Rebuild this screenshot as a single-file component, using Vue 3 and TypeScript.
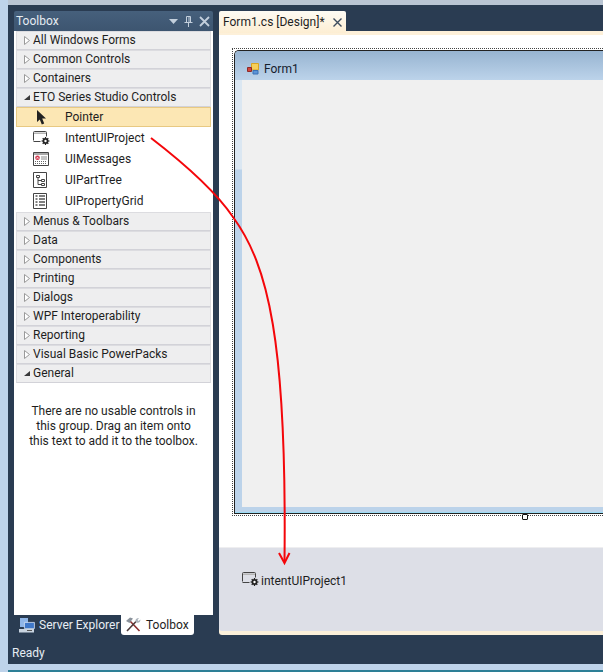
<script setup lang="ts">
const groupsTop = ['All Windows Forms', 'Common Controls', 'Containers']
const groupsBottom = ['Menus & Toolbars', 'Data', 'Components', 'Printing', 'Dialogs', 'WPF Interoperability', 'Reporting', 'Visual Basic PowerPacks']
</script>

<template>
  <div class="app">
    <div class="top-strip"></div>
    <div class="shell">
      <aside class="left">
        <div class="toolbox">
          <header class="tb-head">
            <span class="tb-title">Toolbox</span>
            <span class="tb-btns">
              <svg width="9" height="5" viewBox="0 0 9 5"><path d="M0 0h9L4.500 5z" fill="#c3cfdc" /></svg>
              <svg width="9" height="11" viewBox="0 0 9 11"><path d="M2.500.5h4v6h-4zM5 1v5.500M.5 6.500h8M4.500 7v4" fill="none" stroke="#c3cfdc" /></svg>
              <svg width="11" height="11" viewBox="0 0 11 11"><path d="M1 1l9 9M10 1l-9 9" stroke="#c3cfdc" stroke-width="1.800" /></svg>
            </span>
          </header>
          <div class="tb-body">
            <div v-for="g in groupsTop" :key="g" class="group">
              <svg class="tri" width="6" height="9" viewBox="0 0 6 9"><path d="M.5.500l5 4-5 4z" fill="#fff" stroke="#9a9a9a" /></svg>
              <span>{{ g }}</span>
            </div>
            <div class="group">
              <svg class="tri" width="6" height="9" viewBox="0 0 6 9"><path d="M6 2v5H0z" fill="#3a3a3a" /></svg>
              <span>ETO Series Studio Controls</span>
            </div>
            <div class="item selected">
              <span class="ico pointer">
                <svg width="10" height="15" viewBox="0 0 10 15"><path d="M0 0v12l2.800-2.600 2 5 2.400-1-2-4.800H9z" fill="#222" /></svg>
              </span>
              <span>Pointer</span>
            </div>
            <div class="item tall">
              <span class="ico">
                <svg width="17" height="14" viewBox="0 0 17 14">
                  <path d="M.5 9.500v-8a1 1 0 0 1 1-1h11a1 1 0 0 1 1 1v4M.5 10.500h7" fill="none" stroke="#444" />
                  <path d="M1 1.500h12V3H1z" fill="#b5b5b5" />
                  <path d="M12.500 6v8M8.500 10h8M9.700 7.200l5.600 5.600M15.300 7.200l-5.600 5.600" stroke="#222" stroke-width="1.200" />
                  <circle cx="12.500" cy="10" r="3" fill="#222" />
                  <circle cx="12.500" cy="10" r="1.200" fill="#fff" />
                </svg>
              </span>
              <span>IntentUIProject</span>
            </div>
            <div class="item tall">
              <span class="ico">
                <svg width="16" height="14" viewBox="0 0 16 14">
                  <path d="M.5.500h15v13H.5z" fill="#fff" stroke="#444" />
                  <path d="M1 1h14v2H1z" fill="#a9a9a9" />
                  <circle cx="4.500" cy="5.800" r="2.300" fill="#d2344a" />
                  <path d="M3.500 4.800l2 2M5.500 4.800l-2 2" stroke="#fff" stroke-width=".7" />
                  <path d="M8 5h6M8 7h6" stroke="#8a8a8a" />
                  <path d="M2 9.500h12M2 11.500h12" stroke="#666" stroke-dasharray="1 1" />
                </svg>
              </span>
              <span>UIMessages</span>
            </div>
            <div class="item tall">
              <span class="ico">
                <svg width="14" height="16" viewBox="0 0 14 16">
                  <path d="M.5.500h13v15H.5z" fill="#fff" stroke="#444" />
                  <path d="M3.500 3.500h3v2h-3zM8.500 7.500h3v2h-3zM8.500 11.500h3v2h-3zM5 5.500v7h3.500M5 8.500h3.500" fill="none" stroke="#444" />
                </svg>
              </span>
              <span>UIPartTree</span>
            </div>
            <div class="item tall last">
              <span class="ico">
                <svg width="14" height="16" viewBox="0 0 14 16">
                  <path d="M.5.500h13v15H.5z" fill="#fff" stroke="#444" />
                  <path d="M2.500 3h2M2.500 6h2M2.500 9h2M2.500 12h2M6 3h6M6 6h6M6 9h6M6 12h6" stroke="#555" stroke-width="1.500" />
                </svg>
              </span>
              <span>UIPropertyGrid</span>
            </div>
            <div v-for="g in groupsBottom" :key="g" class="group">
              <svg class="tri" width="6" height="9" viewBox="0 0 6 9"><path d="M.5.500l5 4-5 4z" fill="#fff" stroke="#9a9a9a" /></svg>
              <span>{{ g }}</span>
            </div>
            <div class="group">
              <svg class="tri" width="6" height="9" viewBox="0 0 6 9"><path d="M6 2v5H0z" fill="#3a3a3a" /></svg>
              <span>General</span>
            </div>
            <p class="empty">There are no usable controls in<br />this group. Drag an item onto<br />this text to add it to the toolbox.</p>
          </div>
        </div>
        <div class="tabs">
          <div class="tab dark">
            <svg width="16" height="15" viewBox="0 0 16 15">
              <path d="M1 0h8v9H1z" fill="#8fb6e8" />
              <path d="M5.400 4.400h10v6.200h-10z" fill="#3f78c9" stroke="#d5e3f5" stroke-width=".8" />
              <path d="M0 11h15v3.500H0z" fill="#c9d4e0" />
              <path d="M8 12.500h5" stroke="#555" />
            </svg>
            <span>Server Explorer</span>
          </div>
          <div class="tab light">
            <svg width="16" height="16" viewBox="0 0 16 16">
              <path d="M5 4l9.500 10" stroke="#8a2e2e" stroke-width="1.600" />
              <path d="M11 4.500L2 14" stroke="#4d3a3a" stroke-width="1.600" />
              <path d="M1 4l4-3.500 3 1L4.500 6z" fill="#8a929b" />
              <path d="M10.500 4.500c-.5-2 1-3.500 3.500-3.500l-1.500 2 1 1 2-1.500c0 2.500-2 4-4 3z" fill="#aab2ba" />
            </svg>
            <span>Toolbox</span>
          </div>
        </div>
      </aside>
      <main class="doc">
        <div class="doc-tabs">
          <div class="doc-tab">
            <span>Form1.cs [Design]*</span>
            <svg width="9" height="9" viewBox="0 0 9 9"><path d="M.5.500l8 8M8.500.500l-8 8" stroke="#3d4c5e" stroke-width="1.400" /></svg>
          </div>
        </div>
        <div class="cream-line"></div>
        <div class="design">
          <div class="selection">
            <div class="form">
              <div class="form-title">
                <svg width="13" height="13" viewBox="0 0 13 13">
                  <path d="M4.500 1.500h7v6.500h-7z" fill="#f6cf5a" stroke="#d9a520" />
                  <path d="M.5 5.500h4v4h-4z" fill="#d4463c" stroke="#8e2a28" />
                  <path d="M6 8.500h5v3.500H6z" fill="#5b94d8" stroke="#3a70b5" />
                </svg>
                <span>Form1</span>
              </div>
              <div class="form-client"></div>
            </div>
            <span class="grip"></span>
          </div>
        </div>
        <div class="tray">
          <svg width="17" height="14" viewBox="0 0 17 14">
            <path d="M.5 9.500v-8a1 1 0 0 1 1-1h11a1 1 0 0 1 1 1v4M.5 10.500h7" fill="none" stroke="#444" />
            <path d="M1 1.500h12V3H1z" fill="#b5b5b5" />
            <path d="M12.500 6v8M8.500 10h8M9.700 7.200l5.600 5.600M15.300 7.200l-5.600 5.600" stroke="#222" stroke-width="1.200" />
            <circle cx="12.500" cy="10" r="3" fill="#222" />
            <circle cx="12.500" cy="10" r="1.200" fill="#fff" />
          </svg>
          <span>intentUIProject1</span>
        </div>
      </main>
    </div>
    <footer class="status">Ready</footer>
    <div class="bottom-strip"></div>
    <svg class="arrow" width="603" height="672" viewBox="0 0 603 672">
      <path d="M151 138C190 168 218 195 233 217C268 265 287 340 284.500 562" fill="none" stroke="#f4060a" stroke-width="2" />
      <path d="M279 553l5.500 10 5-10" fill="none" stroke="#f4060a" stroke-width="2" />
    </svg>
  </div>
</template>

<style scoped>
.app {
  position: relative;
  width: 603px;
  height: 672px;
  overflow: hidden;
  display: flex;
  flex-direction: column;
  background: #2a3c52;
  border-left: 8px solid #bed3ea;
  box-sizing: border-box;
  font-family: Roboto, "Noto Sans", sans-serif;
  font-size: 12px;
  color: #1e1e1e;
}
.top-strip {
  height: 5px;
  background: #b9c5d3;
  flex: none;
}
.shell {
  flex: none;
  height: 630px;
  display: flex;
  padding: 6px 0 0 6px;
  box-sizing: border-box;
}
.left {
  width: 199px;
  flex: none;
  display: flex;
  flex-direction: column;
}
.toolbox {
  height: 604px;
  display: flex;
  flex-direction: column;
}
.tb-head {
  height: 20px;
  flex: none;
  display: flex;
  align-items: center;
  justify-content: space-between;
  padding: 0 3px 0 2px;
  background: linear-gradient(#46607c, #3d5570);
  border-radius: 2px 2px 0 0;
  color: #e6ecf2;
}
.tb-btns {
  display: flex;
  align-items: center;
  gap: 6px;
}
.tb-body {
  flex: 1;
  background: #fff;
  padding: 0 2px;
  display: flex;
  flex-direction: column;
}
.group {
  height: 19px;
  flex: none;
  box-sizing: border-box;
  display: flex;
  align-items: center;
  gap: 3px;
  padding: 0 0 1px 7px;
  background: #eeeeef;
  border: 1px solid #dcdce0;
  border-bottom-color: #d2d2d8;
  line-height: 16px;
}
.item {
  height: 20px;
  flex: none;
  box-sizing: border-box;
  display: flex;
  align-items: center;
  padding-left: 16px;
  white-space: nowrap;
}
.item.tall {
  height: 21px;
}
.item.last {
  height: 22px;
}
.selected {
  background: #fce7b4;
  border: 1px solid #e8c982;
  padding-left: 15px;
}
.ico {
  width: 33px;
  display: flex;
  padding-left: 1px;
  box-sizing: border-box;
}
.pointer {
  padding-left: 5px;
}
.empty {
  margin: 21px 0 0;
  text-align: center;
  line-height: 15px;
  white-space: nowrap;
}
.tabs {
  height: 20px;
  display: flex;
  padding-left: 5px;
}
.tab {
  display: flex;
  align-items: center;
  gap: 4px;
  height: 20px;
  white-space: nowrap;
  box-sizing: border-box;
}
.tab.dark {
  color: #e8eef4;
  width: 102px;
}
.tab.light {
  background: #fff;
  border-radius: 0 0 3px 3px;
  width: 73px;
  padding-left: 4px;
  gap: 5px;
}
.doc {
  margin-left: 6px;
  flex: 1;
  min-width: 0;
  display: flex;
  flex-direction: column;
}
.doc-tabs {
  height: 20px;
  flex: none;
  display: flex;
}
.doc-tab {
  width: 127px;
  box-sizing: border-box;
  height: 22px;
  display: flex;
  align-items: center;
  justify-content: space-between;
  padding: 0 4px;
  background: linear-gradient(#fdfbf4, #fdeed3);
  border-radius: 2px 2px 0 0;
  position: relative;
  z-index: 1;
}
.cream-line {
  height: 4px;
  flex: none;
  background: #fdf0d9;
}
.design {
  flex: none;
  height: 513px;
  background: #fff;
  padding: 13px 0 0 13px;
  box-sizing: border-box;
  border-bottom: 1px solid #eeeef0;
}
.selection {
  position: relative;
  height: 468px;
  box-sizing: border-box;
  border: 1px dotted #444;
  border-right: none;
  padding: 1px 0 1px 1px;
}
.form {
  height: 100%;
  box-sizing: border-box;
  display: flex;
  flex-direction: column;
  border: 1px solid #222;
  border-right: none;
  border-radius: 5px 0 0 0;
  background: linear-gradient(#dbe7f2, #dbe7f2 118px, #bcd3ea 119px);
  padding: 0 0 6px 7px;
  box-shadow: inset 0 -1px 0 #9bdcf5, inset 0 -6px 0 #bcd3ea;
}
.form-title {
  height: 29px;
  flex: none;
  box-sizing: border-box;
  margin-left: -7px;
  padding: 6px 0 0 12px;
  display: flex;
  align-items: center;
  gap: 4px;
  background: linear-gradient(#97b4d1, #bcd3ea);
  border-radius: 4px 0 0 0;
  color: #15202c;
}
.form-client {
  flex: 1;
  background: #f0f0f0;
}
.grip {
  position: absolute;
  left: 289px;
  bottom: -5px;
  width: 4px;
  height: 4px;
  border: 1px solid #111;
  border-radius: 1px;
  background: #fff;
}
.tray {
  flex: none;
  height: 83px;
  box-sizing: border-box;
  background: #dddfe7;
  border-radius: 0 0 0 3px;
  padding: 24px 0 0 23px;
  display: flex;
  align-items: flex-start;
  gap: 2px;
  box-shadow: 0 4px 0 #fbf0da;
}
.tray span {
  line-height: 18px;
}
.status {
  height: 29px;
  flex: none;
  padding: 10px 0 0 4px;
  box-sizing: border-box;
  color: #e6ecf2;
  line-height: 16px;
}
.bottom-strip {
  flex: none;
  height: 8px;
  background: #bed3ea;
  border-bottom: 2px solid #2d7f96;
  box-sizing: border-box;
}
.arrow {
  position: absolute;
  left: -8px;
  top: 0;
  pointer-events: none;
}
</style>
